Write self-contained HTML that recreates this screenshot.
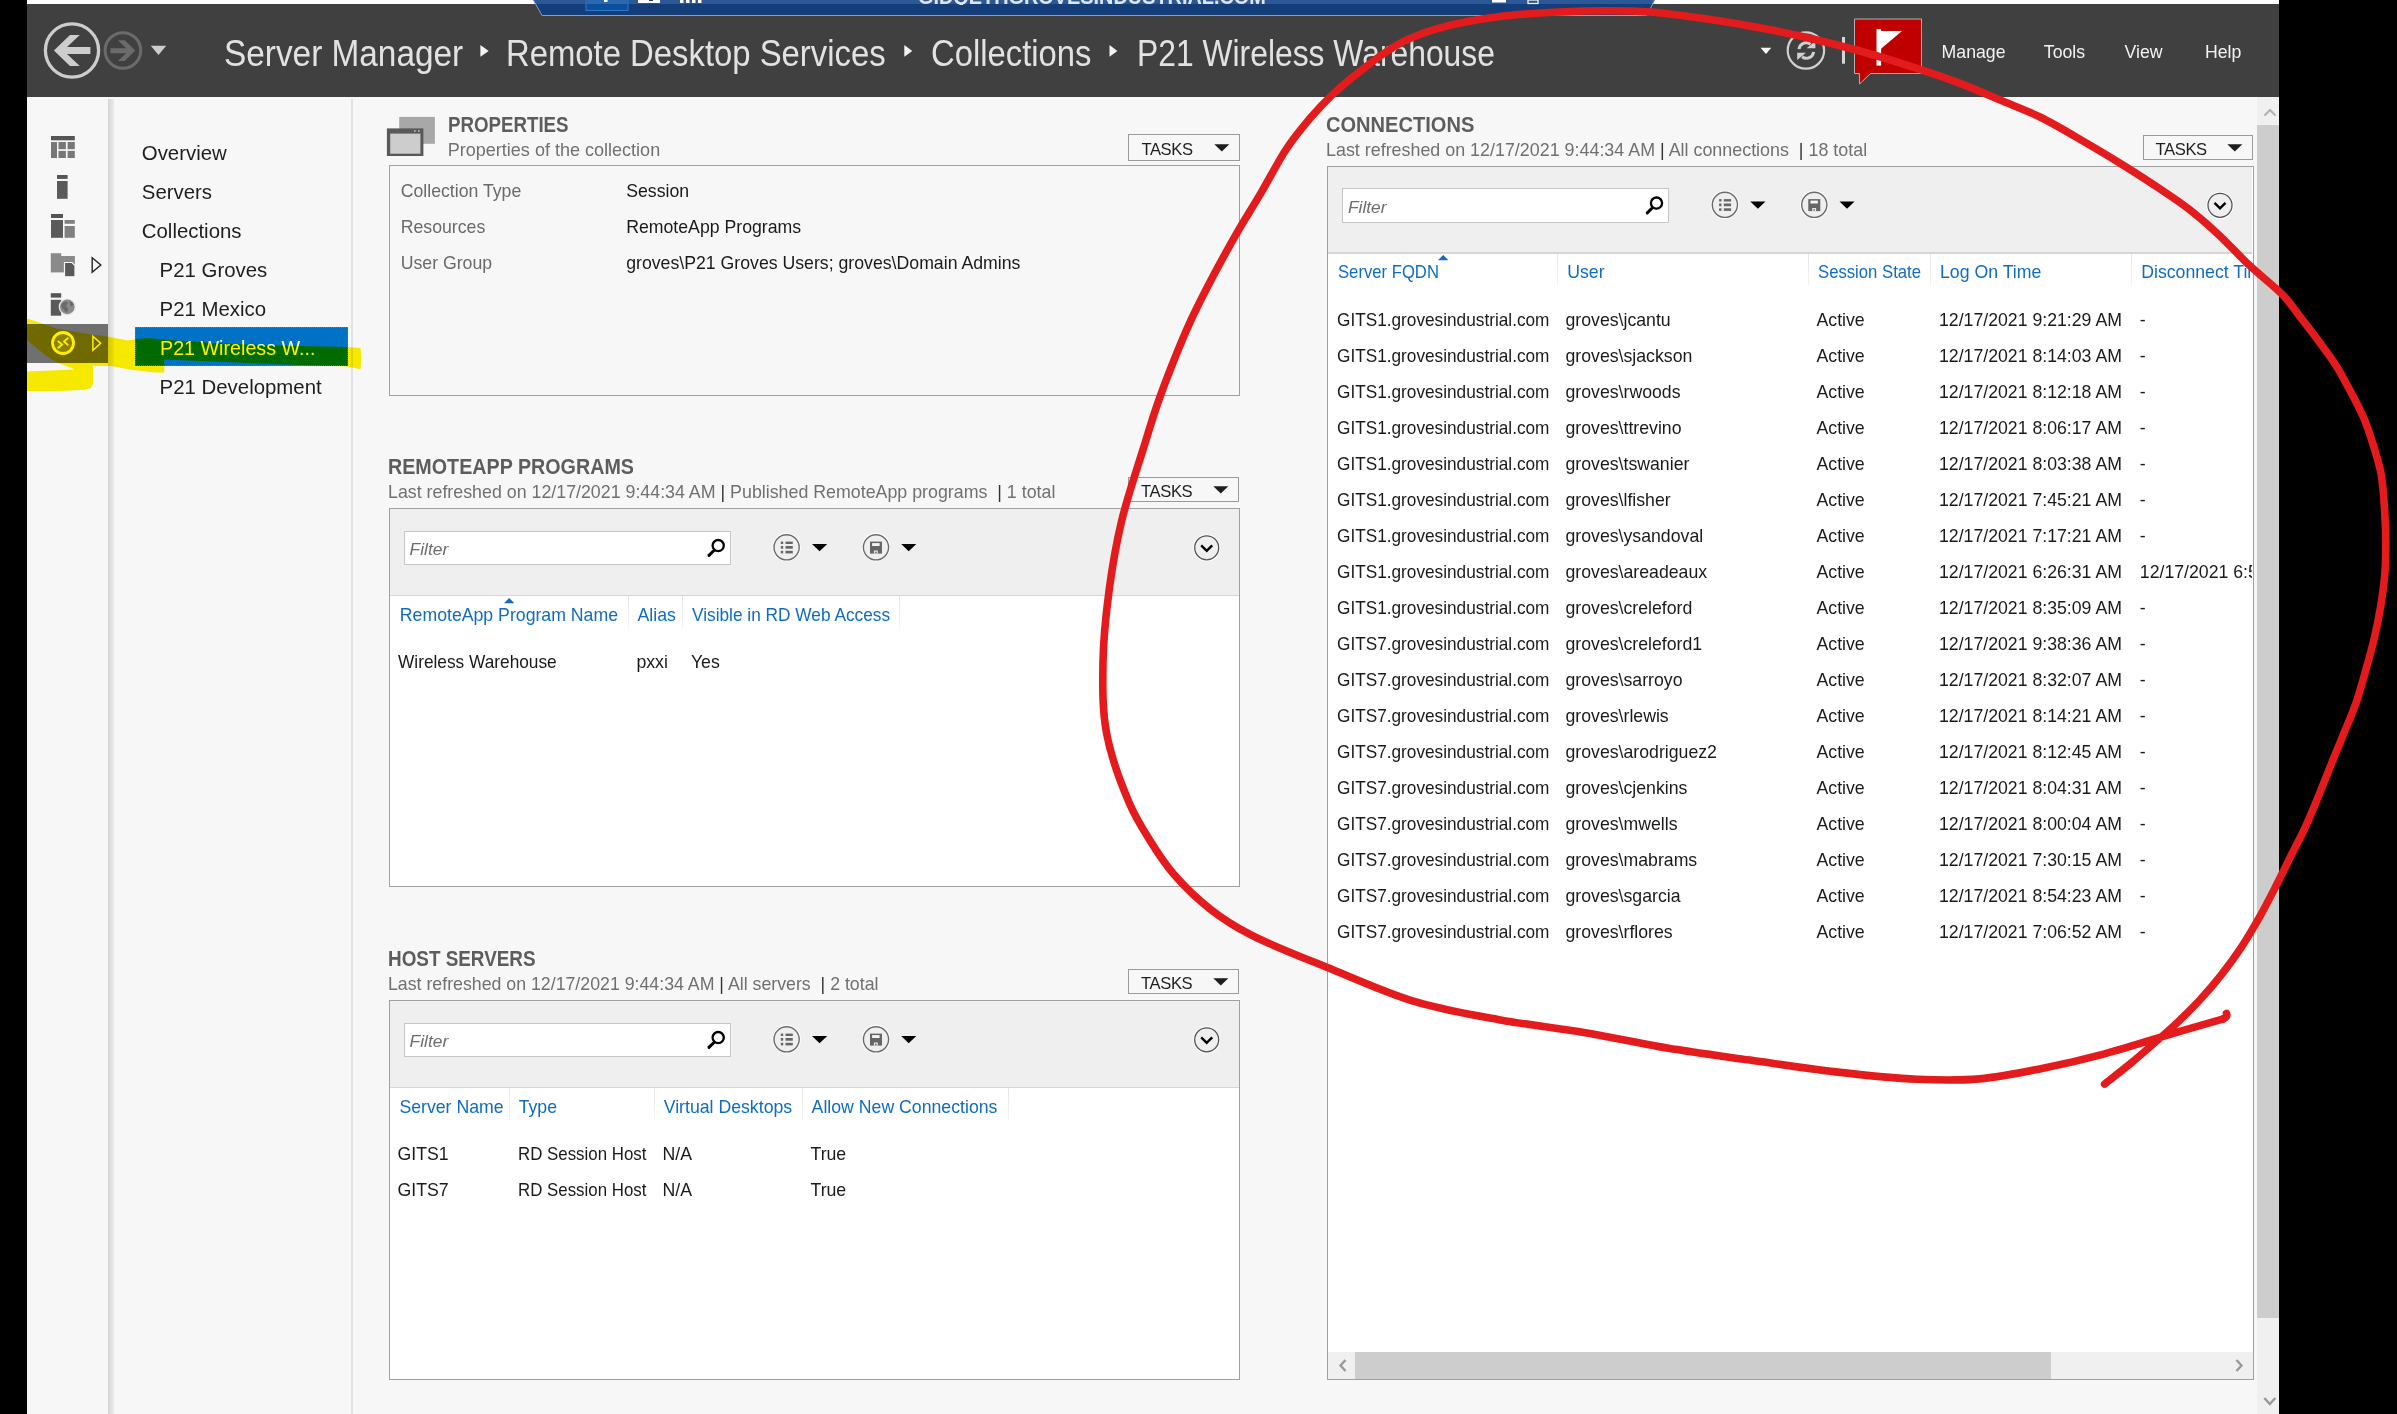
<!DOCTYPE html>
<html><head><meta charset="utf-8"><title>Server Manager</title>
<style>
html,body{margin:0;padding:0;}
body{width:2397px;height:1414px;overflow:hidden;position:relative;background:#f7f7f7;font-family:"Liberation Sans", sans-serif;}
.t{position:absolute;line-height:1;white-space:pre;font-family:"Liberation Sans", sans-serif;}
svg{display:block}
</style></head><body>
<div style="position:absolute;left:0px;top:0px;width:27px;height:1414px;background:#000"></div>
<div style="position:absolute;left:2279px;top:0px;width:118px;height:1414px;background:#000"></div>
<div style="position:absolute;left:27px;top:0px;width:2252px;height:4px;background:#fff"></div>
<div style="position:absolute;left:27px;top:4px;width:2252px;height:93px;background:#404040"></div>
<svg style="position:absolute;left:0;top:0" width="2397" height="20">
<polygon points="533.4,0 1654.5,0 1647,15.5 542,15.5" fill="#133e7a"/>
<polygon points="533.4,0 1654.5,0 1652.6,4 535.3,4" fill="#2c5898"/>
<line x1="542" y1="15.5" x2="1647" y2="15.5" stroke="#7aa0d8" stroke-width="1"/>
<line x1="533.4" y1="0" x2="542" y2="15.5" stroke="#7aa0d8" stroke-width="1"/>
<line x1="1654.5" y1="0" x2="1647" y2="15.5" stroke="#7aa0d8" stroke-width="1"/>
<rect x="586" y="-1" width="42" height="11.5" fill="#0f4f9a" stroke="#2a7bd0" stroke-width="1"/>
<rect x="586.5" y="0" width="41" height="4" fill="#2a68b0"/>
<rect x="604" y="0" width="3.5" height="2" fill="#fff"/>
<rect x="638" y="0" width="22" height="3" fill="#fff"/>
<rect x="649" y="0" width="4" height="1" fill="#133e7a"/>
<rect x="680" y="0" width="3.5" height="3" fill="#fff"/>
<rect x="686" y="0" width="3.5" height="3" fill="#fff"/>
<rect x="692" y="0" width="3.5" height="3" fill="#fff"/>
<rect x="698" y="0" width="3.5" height="3" fill="#fff"/>
</svg>
<div style="position:absolute;left:0;top:0;width:2397px;height:4.5px;overflow:hidden"><div class="t" style="left:917.7px;top:-14.5px;font-size:22px;font-weight:bold;color:#dfe6f0;transform:scaleX(0.9033);transform-origin:0 0">GIDQETHGROVESINDUSTRIAL.COM</div></div>
<svg style="position:absolute;left:0;top:0" width="2397" height="20"><rect x="1492" y="0" width="14" height="2.5" fill="#fff"/><rect x="1528" y="0" width="10" height="3.5" fill="none" stroke="#fff" stroke-width="1.2"/></svg>
<svg style="position:absolute;left:0;top:0" width="260" height="97">
<circle cx="72" cy="50.5" r="26.6" fill="none" stroke="#cdcdcd" stroke-width="3.3"/>
<polygon points="53.9,50.5 70,35 79.8,35 67,47.1 90.4,47.1 90.4,53.9 67,53.9 79.8,66 70,66" fill="#cdcdcd"/>
<circle cx="122.9" cy="50.5" r="17.8" fill="none" stroke="#6b6b6b" stroke-width="3"/>
<polygon points="135.3,50.5 124.7,40.3 117.9,40.3 126.2,48.3 110.5,48.3 110.5,53.3 126.2,53.3 117.9,61 124.7,61" fill="#6b6b6b"/>
<polygon points="150.8,45.8 166.2,45.8 158.5,55" fill="#cdcdcd"/>
</svg>
<div class="t" style="left:223.6px;top:35.00px;font-size:37.5px;color:#e2e2e2;transform:scaleX(0.8896);transform-origin:0 0;">Server Manager</div>
<div class="t" style="left:506.4px;top:35.00px;font-size:37.5px;color:#e2e2e2;transform:scaleX(0.8757);transform-origin:0 0;">Remote Desktop Services</div>
<div class="t" style="left:931.1px;top:35.00px;font-size:37.5px;color:#e2e2e2;transform:scaleX(0.8745);transform-origin:0 0;">Collections</div>
<div class="t" style="left:1136.7px;top:35.00px;font-size:37.5px;color:#e2e2e2;transform:scaleX(0.8487);transform-origin:0 0;">P21 Wireless Warehouse</div>
<svg style="position:absolute;left:0;top:0" width="2397" height="97">
<polygon points="480.4,45 488.7,50.9 480.4,56.7" fill="#f4f4f4"/>
<polygon points="904.3,45 912.3,50.9 904.3,56.7" fill="#f4f4f4"/>
<polygon points="1109.5,45 1117.4,50.9 1109.5,56.7" fill="#f4f4f4"/>
<polygon points="1760.6,47.8 1771.2,47.8 1766,54" fill="#ffffff"/>
<circle cx="1805.9" cy="50.5" r="18.2" fill="none" stroke="#d0d0d0" stroke-width="2.2"/>
<path d="M1799,49.2 A7.2,7.2 0 0 1 1810.5,44.2" fill="none" stroke="#d0d0d0" stroke-width="3"/>
<polygon points="1806.6,48.2 1815.4,48.2 1815.4,41" fill="#d0d0d0"/>
<path d="M1813.6,51.8 A7.2,7.2 0 0 1 1802.1,56.8" fill="none" stroke="#d0d0d0" stroke-width="3"/>
<polygon points="1806,52.8 1797.2,52.8 1797.2,60" fill="#d0d0d0"/>
<rect x="1842" y="37" width="3" height="26.7" fill="#d6d6d6"/>
<polygon points="1854.5,19 1921.5,19 1921.5,73.5 1870.5,73.5 1859.6,84 1859.3,73.5 1854.5,73.5" fill="#c00000" stroke="#b0b0b0" stroke-width="1"/>
<rect x="1876.5" y="29.1" width="4.6" height="36.5" fill="#fff"/>
<polygon points="1881,31 1902,31 1881,48.7" fill="#fff"/>
</svg>
<div class="t" style="left:1941.6px;top:44.00px;font-size:17.7px;color:#f2f2f2;">Manage</div>
<div class="t" style="left:2043.8px;top:44.00px;font-size:17.7px;color:#f2f2f2;">Tools</div>
<div class="t" style="left:2124.6px;top:44.00px;font-size:17.7px;color:#f2f2f2;">View</div>
<div class="t" style="left:2205.0px;top:44.00px;font-size:17.7px;color:#f2f2f2;">Help</div>
<div style="position:absolute;left:27px;top:324.2px;width:81px;height:38.6px;background:#707070"></div>
<div style="position:absolute;left:108px;top:99px;width:6px;height:1315px;background:linear-gradient(to right,#d4d4d4,#e3e3e3 60%,#ececec)"></div>
<svg style="position:absolute;left:0;top:97px" width="110" height="300" viewBox="0 97 110 300">
<rect x="51" y="136" width="23.8" height="4.3" fill="#555"/>
<rect x="51" y="142" width="6" height="16" fill="#777"/>
<rect x="58.5" y="142" width="7.4" height="7.2" fill="#777"/>
<rect x="67.6" y="142" width="7.2" height="7.2" fill="#777"/>
<rect x="58.5" y="150.9" width="7.4" height="7.1" fill="#777"/>
<rect x="67.6" y="150.9" width="7.2" height="7.1" fill="#777"/>
<rect x="57" y="175" width="10.6" height="3.9" fill="#555"/>
<rect x="57" y="181" width="10.6" height="17.8" fill="#5a5a5a"/>
<rect x="51" y="214" width="12" height="4" fill="#555"/>
<rect x="51" y="220" width="12" height="17.8" fill="#5a5a5a"/>
<rect x="64.6" y="220" width="10.2" height="3.8" fill="#808080"/>
<rect x="64.6" y="226" width="10.2" height="11.8" fill="#808080"/>
<rect x="50.8" y="253.2" width="10.4" height="3.3" fill="#8a8a8a"/>
<rect x="50.8" y="256" width="24.1" height="16.4" fill="#8a8a8a"/>
<polygon points="64.5,262.5 72,262.5 75,265.5 75,276.8 64.5,276.8" fill="#5a5a5a" stroke="#f7f7f7" stroke-width="1.2"/>
<polygon points="92.2,257.8 100.8,265 92.2,272.2" fill="none" stroke="#222" stroke-width="1.4"/>
<rect x="50.8" y="293.2" width="10.4" height="4.4" fill="#555"/>
<rect x="50.8" y="299.8" width="10.4" height="15.9" fill="#5a5a5a"/>
<circle cx="67.3" cy="306.9" r="8.6" fill="#e9e9e9"/>
<circle cx="67.3" cy="306.9" r="7.3" fill="#8a8a8a"/>
<path d="M61.5,304 q2.5,-3 5.5,-2.5 q1.5,2 -0.5,3.5 q-1,2 1.5,3 q0.5,2.5 -1,4.5 q-3,-1 -3.5,-3.5 q-2.5,-1 -2,-5z M69.5,301 q3,1 4.2,3.8 q-1.5,0.5 -2.5,2 q-1.5,-1.5 -1.7,-5.8z" fill="#6a6a6a"/>
<circle cx="63" cy="343" r="10.5" fill="#8a8a8a" stroke="#ffffff" stroke-width="2.8"/>
<polyline points="57.7,340.9 62.1,344.5 57.7,348.3" fill="none" stroke="#fff" stroke-width="1.8"/>
<polyline points="68.3,337.7 64,341.4 68.3,345.3" fill="none" stroke="#fff" stroke-width="1.8"/>
<polygon points="92.9,336.3 100.6,343.3 92.9,350.2" fill="none" stroke="#fff" stroke-width="1.5"/>
</svg>
<div style="position:absolute;left:351px;top:99px;width:1.6px;height:1315px;background:#e2e2e2"></div>
<div class="t" style="left:141.8px;top:143.00px;font-size:20.4px;color:#1e1e1e;">Overview</div>
<div class="t" style="left:141.8px;top:182.00px;font-size:20.4px;color:#1e1e1e;">Servers</div>
<div class="t" style="left:141.8px;top:221.00px;font-size:20.4px;color:#1e1e1e;">Collections</div>
<div class="t" style="left:159.6px;top:260.00px;font-size:20.4px;color:#1e1e1e;">P21 Groves</div>
<div class="t" style="left:159.6px;top:299.00px;font-size:20.4px;color:#1e1e1e;">P21 Mexico</div>
<div style="position:absolute;left:135px;top:327px;width:213px;height:39px;background:#0072c6;box-sizing:border-box;border:1px dotted #a06a3a"></div>
<div class="t" style="left:159.6px;top:338.00px;font-size:20.4px;color:#ffffff;transform:scaleX(0.9660);transform-origin:0 0;">P21 Wireless W...</div>
<div class="t" style="left:159.6px;top:377.00px;font-size:20.4px;color:#1e1e1e;">P21 Development</div>
<svg style="position:absolute;left:380px;top:110px" width="60" height="50" viewBox="380 110 60 50">
<rect x="399.2" y="116.9" width="35.7" height="26.9" fill="#a8a8a8"/>
<rect x="386.9" y="128.4" width="36.5" height="27.6" fill="#595959"/>
<rect x="390.2" y="133.6" width="30.2" height="20.1" fill="#cdcdcd"/>
<rect x="414" y="130.3" width="1.6" height="1.4" fill="#ccc"/>
<rect x="418" y="130.3" width="1.6" height="1.4" fill="#ccc"/>
</svg>
<div class="t" style="left:447.7px;top:114.00px;font-size:21.6px;color:#5d5d5d;font-weight:bold;transform:scaleX(0.8662);transform-origin:0 0;">PROPERTIES</div>
<div class="t" style="left:447.7px;top:141.00px;font-size:18.05px;color:#707070;">Properties of the collection</div>
<div style="position:absolute;left:1128.3px;top:134px;width:111.40000000000009px;height:26.69999999999999px;box-sizing:border-box;border:1px solid #9a9a9a;background:#f7f7f7"></div>
<div class="t" style="left:1141.4px;top:142.00px;font-size:16.6px;color:#1e1e1e;letter-spacing:-0.4px">TASKS</div>
<svg style="position:absolute;left:1213.7px;top:143.5px" width="16" height="9"><polygon points="0.3,0.2 15.3,0.2 7.8,7.6" fill="#1e1e1e"/></svg>
<div style="position:absolute;left:389px;top:165px;width:851px;height:231px;box-sizing:border-box;border:1px solid #a0a0a0"></div>
<div class="t" style="left:400.7px;top:183.00px;font-size:17.7px;color:#6a6a6a;">Collection Type</div>
<div class="t" style="left:626.2px;top:183.00px;font-size:17.7px;color:#1a1a1a;">Session</div>
<div class="t" style="left:400.7px;top:219.00px;font-size:17.7px;color:#6a6a6a;">Resources</div>
<div class="t" style="left:626.2px;top:219.00px;font-size:17.7px;color:#1a1a1a;">RemoteApp Programs</div>
<div class="t" style="left:400.7px;top:255.00px;font-size:17.7px;color:#6a6a6a;">User Group</div>
<div class="t" style="left:626.2px;top:255.00px;font-size:17.7px;color:#1a1a1a;">groves\P21 Groves Users; groves\Domain Admins</div>
<div class="t" style="left:387.6px;top:456.00px;font-size:21.6px;color:#5d5d5d;font-weight:bold;transform:scaleX(0.9124);transform-origin:0 0;">REMOTEAPP PROGRAMS</div>
<div class="t" style="left:387.6px;top:484.00px;font-size:17.7px;color:#707070;transform:scaleX(1.0064);transform-origin:0 0;"><span style="color:#707070">Last refreshed on 12/17/2021 9:44:34 AM </span><span style="color:#333">|</span><span style="color:#707070"> Published RemoteApp programs  </span><span style="color:#333">|</span><span style="color:#707070"> 1 total</span></div>
<div style="position:absolute;left:1128px;top:476.5px;width:111.29999999999995px;height:25.69999999999999px;box-sizing:border-box;border:1px solid #9a9a9a;background:#f7f7f7"></div>
<div class="t" style="left:1141.1px;top:484.00px;font-size:16.6px;color:#1e1e1e;letter-spacing:-0.4px">TASKS</div>
<svg style="position:absolute;left:1213.3px;top:486.0px" width="16" height="9"><polygon points="0.3,0.2 15.3,0.2 7.8,7.6" fill="#1e1e1e"/></svg>
<div style="position:absolute;left:389px;top:508px;width:851px;height:379px;box-sizing:border-box;border:1px solid #a0a0a0;background:#fff"></div>
<div style="position:absolute;left:390px;top:509px;width:849px;height:87px;background:#efefef"></div>
<div style="position:absolute;left:390px;top:594.5px;width:849px;height:1.5px;background:#d6d6d6"></div>
<div style="position:absolute;left:404px;top:530.5px;width:326.70000000000005px;height:34.89999999999998px;box-sizing:border-box;border:1px solid #c6c6c6;background:#fff"></div>
<div class="t" style="left:409.6px;top:541.00px;font-size:17.4px;color:#6d6d6d;font-style:italic">Filter</div>
<svg style="position:absolute;left:0;top:0;overflow:visible" width="1" height="1">
<circle cx="718.2" cy="545.5999999999999" r="5.6" fill="none" stroke="#000" stroke-width="2.3"/>
<line x1="709.0" y1="555.4" x2="713.9000000000001" y2="550.5" stroke="#000" stroke-width="3" stroke-linecap="round"/>
<circle cx="786.6" cy="547.3" r="14.2" fill="#ffffff"/>
<circle cx="786.6" cy="547.3" r="12.6" fill="#efefef" stroke="#6b6b6b" stroke-width="1.4"/>
<rect x="780.8000000000001" y="541.5999999999999" width="2.4" height="2.4" fill="#666"/>
<rect x="780.8000000000001" y="546.0" width="2.4" height="2.7" fill="#666"/>
<rect x="780.8000000000001" y="550.8" width="2.4" height="2.6" fill="#666"/>
<rect x="785.5" y="541.5999999999999" width="7.3" height="2.4" fill="#666"/>
<rect x="785.5" y="546.0" width="7.3" height="2.7" fill="#666"/>
<rect x="785.5" y="550.8" width="7.3" height="2.6" fill="#666"/>
<polygon points="812.0,544.0 827.2,544.0 819.6,551.3" fill="#000"/>
<circle cx="876.0" cy="547.3" r="14.2" fill="#ffffff"/>
<circle cx="876.0" cy="547.3" r="12.6" fill="#efefef" stroke="#6b6b6b" stroke-width="1.4"/>
<rect x="870.0" y="541.5999999999999" width="12" height="12" fill="#666"/>
<rect x="872.1" y="543.0999999999999" width="7.5" height="2.9" fill="#f4f4f4"/>
<rect x="873.9" y="550.5" width="3.9" height="3.1" fill="#e8e8e8"/>
<rect x="875.1" y="551.6999999999999" width="1.5" height="1.5" fill="#666"/>
<polygon points="901.2,544.0 916.3000000000001,544.0 908.7,551.3" fill="#000"/>
<circle cx="1206.7" cy="547.8" r="13.6" fill="#ffffff"/>
<circle cx="1206.7" cy="547.8" r="12" fill="#efefef" stroke="#555" stroke-width="1.3"/>
<polyline points="1201.2,545.3 1206.7,550.8 1212.2,545.3" fill="none" stroke="#000" stroke-width="2.4"/>
</svg>
<div class="t" style="left:399.8px;top:607.00px;font-size:17.7px;color:#0f6cc0;">RemoteApp Program Name</div>
<div class="t" style="left:637.5px;top:607.00px;font-size:17.7px;color:#0f6cc0;">Alias</div>
<div class="t" style="left:692.0px;top:607.00px;font-size:17.7px;color:#0f6cc0;transform:scaleX(0.9764);transform-origin:0 0;">Visible in RD Web Access</div>
<div style="position:absolute;left:627.8px;top:596px;width:1px;height:32px;background:linear-gradient(#e4e4e4,#f4f4f4)"></div>
<div style="position:absolute;left:681.9px;top:596px;width:1px;height:32px;background:linear-gradient(#e4e4e4,#f4f4f4)"></div>
<div style="position:absolute;left:899.3px;top:596px;width:1px;height:32px;background:linear-gradient(#e4e4e4,#f4f4f4)"></div>
<svg style="position:absolute;left:503.8px;top:597.5px" width="11" height="6"><polygon points="0,5.2 10.4,5.2 5.2,0" fill="#0f6cc0"/></svg>
<div class="t" style="left:398.0px;top:654.00px;font-size:17.7px;color:#1a1a1a;transform:scaleX(0.9765);transform-origin:0 0;">Wireless Warehouse</div>
<div class="t" style="left:636.4px;top:654.00px;font-size:17.7px;color:#1a1a1a;">pxxi</div>
<div class="t" style="left:690.9px;top:654.00px;font-size:17.7px;color:#1a1a1a;">Yes</div>
<div class="t" style="left:387.6px;top:948.00px;font-size:21.6px;color:#5d5d5d;font-weight:bold;transform:scaleX(0.8742);transform-origin:0 0;">HOST SERVERS</div>
<div class="t" style="left:387.6px;top:976.00px;font-size:17.7px;color:#707070;transform:scaleX(1.0029);transform-origin:0 0;"><span style="color:#707070">Last refreshed on 12/17/2021 9:44:34 AM </span><span style="color:#333">|</span><span style="color:#707070"> All servers  </span><span style="color:#333">|</span><span style="color:#707070"> 2 total</span></div>
<div style="position:absolute;left:1128px;top:968.7px;width:111.29999999999995px;height:25.699999999999932px;box-sizing:border-box;border:1px solid #9a9a9a;background:#f7f7f7"></div>
<div class="t" style="left:1141.1px;top:976.00px;font-size:16.6px;color:#1e1e1e;letter-spacing:-0.4px">TASKS</div>
<svg style="position:absolute;left:1213.3px;top:978.2px" width="16" height="9"><polygon points="0.3,0.2 15.3,0.2 7.8,7.6" fill="#1e1e1e"/></svg>
<div style="position:absolute;left:389px;top:1000px;width:851px;height:380px;box-sizing:border-box;border:1px solid #a0a0a0;background:#fff"></div>
<div style="position:absolute;left:390px;top:1001px;width:849px;height:87px;background:#efefef"></div>
<div style="position:absolute;left:390px;top:1086.5px;width:849px;height:1.5px;background:#d6d6d6"></div>
<div style="position:absolute;left:404px;top:1022.5px;width:326.70000000000005px;height:34.90000000000009px;box-sizing:border-box;border:1px solid #c6c6c6;background:#fff"></div>
<div class="t" style="left:409.6px;top:1033.00px;font-size:17.4px;color:#6d6d6d;font-style:italic">Filter</div>
<svg style="position:absolute;left:0;top:0;overflow:visible" width="1" height="1">
<circle cx="718.2" cy="1037.6" r="5.6" fill="none" stroke="#000" stroke-width="2.3"/>
<line x1="709.0" y1="1047.3999999999999" x2="713.9000000000001" y2="1042.5" stroke="#000" stroke-width="3" stroke-linecap="round"/>
<circle cx="786.6" cy="1039.3" r="14.2" fill="#ffffff"/>
<circle cx="786.6" cy="1039.3" r="12.6" fill="#efefef" stroke="#6b6b6b" stroke-width="1.4"/>
<rect x="780.8000000000001" y="1033.6" width="2.4" height="2.4" fill="#666"/>
<rect x="780.8000000000001" y="1038.0" width="2.4" height="2.7" fill="#666"/>
<rect x="780.8000000000001" y="1042.8" width="2.4" height="2.6" fill="#666"/>
<rect x="785.5" y="1033.6" width="7.3" height="2.4" fill="#666"/>
<rect x="785.5" y="1038.0" width="7.3" height="2.7" fill="#666"/>
<rect x="785.5" y="1042.8" width="7.3" height="2.6" fill="#666"/>
<polygon points="812.0,1036.0 827.2,1036.0 819.6,1043.3" fill="#000"/>
<circle cx="876.0" cy="1039.3" r="14.2" fill="#ffffff"/>
<circle cx="876.0" cy="1039.3" r="12.6" fill="#efefef" stroke="#6b6b6b" stroke-width="1.4"/>
<rect x="870.0" y="1033.6" width="12" height="12" fill="#666"/>
<rect x="872.1" y="1035.1" width="7.5" height="2.9" fill="#f4f4f4"/>
<rect x="873.9" y="1042.5" width="3.9" height="3.1" fill="#e8e8e8"/>
<rect x="875.1" y="1043.7" width="1.5" height="1.5" fill="#666"/>
<polygon points="901.2,1036.0 916.3000000000001,1036.0 908.7,1043.3" fill="#000"/>
<circle cx="1206.7" cy="1039.8" r="13.6" fill="#ffffff"/>
<circle cx="1206.7" cy="1039.8" r="12" fill="#efefef" stroke="#555" stroke-width="1.3"/>
<polyline points="1201.2,1037.3 1206.7,1042.8 1212.2,1037.3" fill="none" stroke="#000" stroke-width="2.4"/>
</svg>
<div class="t" style="left:399.4px;top:1099.00px;font-size:17.7px;color:#0f6cc0;">Server Name</div>
<div class="t" style="left:518.7px;top:1099.00px;font-size:17.7px;color:#0f6cc0;">Type</div>
<div class="t" style="left:663.7px;top:1099.00px;font-size:17.7px;color:#0f6cc0;">Virtual Desktops</div>
<div class="t" style="left:811.6px;top:1099.00px;font-size:17.7px;color:#0f6cc0;">Allow New Connections</div>
<div style="position:absolute;left:508.8px;top:1088px;width:1px;height:32px;background:linear-gradient(#e4e4e4,#f4f4f4)"></div>
<div style="position:absolute;left:653.8px;top:1088px;width:1px;height:32px;background:linear-gradient(#e4e4e4,#f4f4f4)"></div>
<div style="position:absolute;left:802px;top:1088px;width:1px;height:32px;background:linear-gradient(#e4e4e4,#f4f4f4)"></div>
<div style="position:absolute;left:1008px;top:1088px;width:1px;height:32px;background:linear-gradient(#e4e4e4,#f4f4f4)"></div>
<svg style="position:absolute;left:-105.2px;top:1089.5px" width="11" height="6"><polygon points="0,5.2 10.4,5.2 5.2,0" fill="#0f6cc0"/></svg>
<div class="t" style="left:397.5px;top:1146.00px;font-size:17.7px;color:#1a1a1a;">GITS1</div>
<div class="t" style="left:518.0px;top:1146.00px;font-size:17.7px;color:#1a1a1a;transform:scaleX(0.9535);transform-origin:0 0;">RD Session Host</div>
<div class="t" style="left:662.6px;top:1146.00px;font-size:17.7px;color:#1a1a1a;">N/A</div>
<div class="t" style="left:810.5px;top:1146.00px;font-size:17.7px;color:#1a1a1a;">True</div>
<div class="t" style="left:397.5px;top:1182.00px;font-size:17.7px;color:#1a1a1a;">GITS7</div>
<div class="t" style="left:518.0px;top:1182.00px;font-size:17.7px;color:#1a1a1a;transform:scaleX(0.9535);transform-origin:0 0;">RD Session Host</div>
<div class="t" style="left:662.6px;top:1182.00px;font-size:17.7px;color:#1a1a1a;">N/A</div>
<div class="t" style="left:810.5px;top:1182.00px;font-size:17.7px;color:#1a1a1a;">True</div>
<div class="t" style="left:1326.0px;top:114.00px;font-size:21.6px;color:#5d5d5d;font-weight:bold;transform:scaleX(0.9298);transform-origin:0 0;">CONNECTIONS</div>
<div class="t" style="left:1326px;top:142.00px;font-size:17.7px;color:#707070;transform:scaleX(1.0109);transform-origin:0 0;"><span style="color:#707070">Last refreshed on 12/17/2021 9:44:34 AM </span><span style="color:#333">|</span><span style="color:#707070"> All connections  </span><span style="color:#333">|</span><span style="color:#707070"> 18 total</span></div>
<div style="position:absolute;left:2142.5px;top:134.9px;width:110.80000000000018px;height:25.400000000000006px;box-sizing:border-box;border:1px solid #9a9a9a;background:#f7f7f7"></div>
<div class="t" style="left:2155.6px;top:142.00px;font-size:16.6px;color:#1e1e1e;letter-spacing:-0.4px">TASKS</div>
<svg style="position:absolute;left:2227.3px;top:144.4px" width="16" height="9"><polygon points="0.3,0.2 15.3,0.2 7.8,7.6" fill="#1e1e1e"/></svg>
<div style="position:absolute;left:1327.3px;top:165.5px;width:927px;height:1214.5px;box-sizing:border-box;border:1px solid #a0a0a0;background:#fff"></div>
<div style="position:absolute;left:1328.3px;top:166.5px;width:924.0000000000002px;height:87px;background:#efefef"></div>
<div style="position:absolute;left:1328.3px;top:252.0px;width:924.0000000000002px;height:1.5px;background:#d6d6d6"></div>
<div style="position:absolute;left:1342.3px;top:188.0px;width:326.70000000000005px;height:34.900000000000006px;box-sizing:border-box;border:1px solid #c6c6c6;background:#fff"></div>
<div class="t" style="left:1347.9px;top:199.00px;font-size:17.4px;color:#6d6d6d;font-style:italic">Filter</div>
<svg style="position:absolute;left:0;top:0;overflow:visible" width="1" height="1">
<circle cx="1656.5" cy="203.10000000000002" r="5.6" fill="none" stroke="#000" stroke-width="2.3"/>
<line x1="1647.3" y1="212.9" x2="1652.2" y2="208.0" stroke="#000" stroke-width="3" stroke-linecap="round"/>
<circle cx="1724.9" cy="204.8" r="14.2" fill="#ffffff"/>
<circle cx="1724.9" cy="204.8" r="12.6" fill="#efefef" stroke="#6b6b6b" stroke-width="1.4"/>
<rect x="1719.1000000000001" y="199.10000000000002" width="2.4" height="2.4" fill="#666"/>
<rect x="1719.1000000000001" y="203.5" width="2.4" height="2.7" fill="#666"/>
<rect x="1719.1000000000001" y="208.3" width="2.4" height="2.6" fill="#666"/>
<rect x="1723.8000000000002" y="199.10000000000002" width="7.3" height="2.4" fill="#666"/>
<rect x="1723.8000000000002" y="203.5" width="7.3" height="2.7" fill="#666"/>
<rect x="1723.8000000000002" y="208.3" width="7.3" height="2.6" fill="#666"/>
<polygon points="1750.3,201.5 1765.5,201.5 1757.9,208.8" fill="#000"/>
<circle cx="1814.3" cy="204.8" r="14.2" fill="#ffffff"/>
<circle cx="1814.3" cy="204.8" r="12.6" fill="#efefef" stroke="#6b6b6b" stroke-width="1.4"/>
<rect x="1808.3" y="199.10000000000002" width="12" height="12" fill="#666"/>
<rect x="1810.3999999999999" y="200.60000000000002" width="7.5" height="2.9" fill="#f4f4f4"/>
<rect x="1812.2" y="208.0" width="3.9" height="3.1" fill="#e8e8e8"/>
<rect x="1813.3999999999999" y="209.20000000000002" width="1.5" height="1.5" fill="#666"/>
<polygon points="1839.5,201.5 1854.6,201.5 1847.0,208.8" fill="#000"/>
<circle cx="2220.0" cy="205.3" r="13.6" fill="#ffffff"/>
<circle cx="2220.0" cy="205.3" r="12" fill="#efefef" stroke="#555" stroke-width="1.3"/>
<polyline points="2214.5,202.8 2220.0,208.3 2225.5,202.8" fill="none" stroke="#000" stroke-width="2.4"/>
</svg>
<div style="position:absolute;left:1328px;top:252.5px;width:924px;height:1000px;overflow:hidden">
<div class="t" style="left:10.3px;top:11.50px;font-size:17.7px;color:#0f6cc0;transform:scaleX(0.9422);transform-origin:0 0;">Server FQDN</div>
<div class="t" style="left:239.2px;top:11.50px;font-size:17.7px;color:#0f6cc0;">User</div>
<div class="t" style="left:490.2px;top:11.50px;font-size:17.7px;color:#0f6cc0;transform:scaleX(0.9440);transform-origin:0 0;">Session State</div>
<div class="t" style="left:612.2px;top:11.50px;font-size:17.7px;color:#0f6cc0;transform:scaleX(1.0006);transform-origin:0 0;">Log On Time</div>
<div class="t" style="left:813.2px;top:11.50px;font-size:17.7px;color:#0f6cc0;">Disconnect Time</div>
<div style="position:absolute;left:229.4000000000001px;top:1px;width:1px;height:32px;background:linear-gradient(#e4e4e4,#f4f4f4)"></div>
<div style="position:absolute;left:480.4000000000001px;top:1px;width:1px;height:32px;background:linear-gradient(#e4e4e4,#f4f4f4)"></div>
<div style="position:absolute;left:602px;top:1px;width:1px;height:32px;background:linear-gradient(#e4e4e4,#f4f4f4)"></div>
<div style="position:absolute;left:802.5px;top:1px;width:1px;height:32px;background:linear-gradient(#e4e4e4,#f4f4f4)"></div>
<svg style="position:absolute;left:109.79999999999995px;top:2.5px" width="11" height="6"><polygon points="0,5.2 10.4,5.2 5.2,0" fill="#0f6cc0"/></svg>
<div class="t" style="left:8.6px;top:59.50px;font-size:17.7px;color:#1a1a1a;transform:scaleX(0.9735);transform-origin:0 0;">GITS1.grovesindustrial.com</div>
<div class="t" style="left:237.5px;top:59.50px;font-size:17.7px;color:#1a1a1a;">groves\jcantu</div>
<div class="t" style="left:488.5px;top:59.50px;font-size:17.7px;color:#1a1a1a;">Active</div>
<div class="t" style="left:611.0px;top:59.50px;font-size:17.7px;color:#1a1a1a;">12/17/2021 9:21:29 AM</div>
<div class="t" style="left:811.8px;top:59.50px;font-size:17.7px;color:#1a1a1a;">-</div>
<div class="t" style="left:8.6px;top:95.50px;font-size:17.7px;color:#1a1a1a;transform:scaleX(0.9735);transform-origin:0 0;">GITS1.grovesindustrial.com</div>
<div class="t" style="left:237.5px;top:95.50px;font-size:17.7px;color:#1a1a1a;">groves\sjackson</div>
<div class="t" style="left:488.5px;top:95.50px;font-size:17.7px;color:#1a1a1a;">Active</div>
<div class="t" style="left:611.0px;top:95.50px;font-size:17.7px;color:#1a1a1a;">12/17/2021 8:14:03 AM</div>
<div class="t" style="left:811.8px;top:95.50px;font-size:17.7px;color:#1a1a1a;">-</div>
<div class="t" style="left:8.6px;top:131.50px;font-size:17.7px;color:#1a1a1a;transform:scaleX(0.9735);transform-origin:0 0;">GITS1.grovesindustrial.com</div>
<div class="t" style="left:237.5px;top:131.50px;font-size:17.7px;color:#1a1a1a;">groves\rwoods</div>
<div class="t" style="left:488.5px;top:131.50px;font-size:17.7px;color:#1a1a1a;">Active</div>
<div class="t" style="left:611.0px;top:131.50px;font-size:17.7px;color:#1a1a1a;">12/17/2021 8:12:18 AM</div>
<div class="t" style="left:811.8px;top:131.50px;font-size:17.7px;color:#1a1a1a;">-</div>
<div class="t" style="left:8.6px;top:167.50px;font-size:17.7px;color:#1a1a1a;transform:scaleX(0.9735);transform-origin:0 0;">GITS1.grovesindustrial.com</div>
<div class="t" style="left:237.5px;top:167.50px;font-size:17.7px;color:#1a1a1a;">groves\ttrevino</div>
<div class="t" style="left:488.5px;top:167.50px;font-size:17.7px;color:#1a1a1a;">Active</div>
<div class="t" style="left:611.0px;top:167.50px;font-size:17.7px;color:#1a1a1a;">12/17/2021 8:06:17 AM</div>
<div class="t" style="left:811.8px;top:167.50px;font-size:17.7px;color:#1a1a1a;">-</div>
<div class="t" style="left:8.6px;top:203.50px;font-size:17.7px;color:#1a1a1a;transform:scaleX(0.9735);transform-origin:0 0;">GITS1.grovesindustrial.com</div>
<div class="t" style="left:237.5px;top:203.50px;font-size:17.7px;color:#1a1a1a;">groves\tswanier</div>
<div class="t" style="left:488.5px;top:203.50px;font-size:17.7px;color:#1a1a1a;">Active</div>
<div class="t" style="left:611.0px;top:203.50px;font-size:17.7px;color:#1a1a1a;">12/17/2021 8:03:38 AM</div>
<div class="t" style="left:811.8px;top:203.50px;font-size:17.7px;color:#1a1a1a;">-</div>
<div class="t" style="left:8.6px;top:239.50px;font-size:17.7px;color:#1a1a1a;transform:scaleX(0.9735);transform-origin:0 0;">GITS1.grovesindustrial.com</div>
<div class="t" style="left:237.5px;top:239.50px;font-size:17.7px;color:#1a1a1a;">groves\lfisher</div>
<div class="t" style="left:488.5px;top:239.50px;font-size:17.7px;color:#1a1a1a;">Active</div>
<div class="t" style="left:611.0px;top:239.50px;font-size:17.7px;color:#1a1a1a;">12/17/2021 7:45:21 AM</div>
<div class="t" style="left:811.8px;top:239.50px;font-size:17.7px;color:#1a1a1a;">-</div>
<div class="t" style="left:8.6px;top:275.50px;font-size:17.7px;color:#1a1a1a;transform:scaleX(0.9735);transform-origin:0 0;">GITS1.grovesindustrial.com</div>
<div class="t" style="left:237.5px;top:275.50px;font-size:17.7px;color:#1a1a1a;">groves\ysandoval</div>
<div class="t" style="left:488.5px;top:275.50px;font-size:17.7px;color:#1a1a1a;">Active</div>
<div class="t" style="left:611.0px;top:275.50px;font-size:17.7px;color:#1a1a1a;">12/17/2021 7:17:21 AM</div>
<div class="t" style="left:811.8px;top:275.50px;font-size:17.7px;color:#1a1a1a;">-</div>
<div class="t" style="left:8.6px;top:311.50px;font-size:17.7px;color:#1a1a1a;transform:scaleX(0.9735);transform-origin:0 0;">GITS1.grovesindustrial.com</div>
<div class="t" style="left:237.5px;top:311.50px;font-size:17.7px;color:#1a1a1a;">groves\areadeaux</div>
<div class="t" style="left:488.5px;top:311.50px;font-size:17.7px;color:#1a1a1a;">Active</div>
<div class="t" style="left:611.0px;top:311.50px;font-size:17.7px;color:#1a1a1a;">12/17/2021 6:26:31 AM</div>
<div class="t" style="left:811.8px;top:311.50px;font-size:17.7px;color:#1a1a1a;">12/17/2021 6:55:12 AM</div>
<div class="t" style="left:8.6px;top:347.50px;font-size:17.7px;color:#1a1a1a;transform:scaleX(0.9735);transform-origin:0 0;">GITS1.grovesindustrial.com</div>
<div class="t" style="left:237.5px;top:347.50px;font-size:17.7px;color:#1a1a1a;">groves\creleford</div>
<div class="t" style="left:488.5px;top:347.50px;font-size:17.7px;color:#1a1a1a;">Active</div>
<div class="t" style="left:611.0px;top:347.50px;font-size:17.7px;color:#1a1a1a;">12/17/2021 8:35:09 AM</div>
<div class="t" style="left:811.8px;top:347.50px;font-size:17.7px;color:#1a1a1a;">-</div>
<div class="t" style="left:8.6px;top:383.50px;font-size:17.7px;color:#1a1a1a;transform:scaleX(0.9735);transform-origin:0 0;">GITS7.grovesindustrial.com</div>
<div class="t" style="left:237.5px;top:383.50px;font-size:17.7px;color:#1a1a1a;">groves\creleford1</div>
<div class="t" style="left:488.5px;top:383.50px;font-size:17.7px;color:#1a1a1a;">Active</div>
<div class="t" style="left:611.0px;top:383.50px;font-size:17.7px;color:#1a1a1a;">12/17/2021 9:38:36 AM</div>
<div class="t" style="left:811.8px;top:383.50px;font-size:17.7px;color:#1a1a1a;">-</div>
<div class="t" style="left:8.6px;top:419.50px;font-size:17.7px;color:#1a1a1a;transform:scaleX(0.9735);transform-origin:0 0;">GITS7.grovesindustrial.com</div>
<div class="t" style="left:237.5px;top:419.50px;font-size:17.7px;color:#1a1a1a;">groves\sarroyo</div>
<div class="t" style="left:488.5px;top:419.50px;font-size:17.7px;color:#1a1a1a;">Active</div>
<div class="t" style="left:611.0px;top:419.50px;font-size:17.7px;color:#1a1a1a;">12/17/2021 8:32:07 AM</div>
<div class="t" style="left:811.8px;top:419.50px;font-size:17.7px;color:#1a1a1a;">-</div>
<div class="t" style="left:8.6px;top:455.50px;font-size:17.7px;color:#1a1a1a;transform:scaleX(0.9735);transform-origin:0 0;">GITS7.grovesindustrial.com</div>
<div class="t" style="left:237.5px;top:455.50px;font-size:17.7px;color:#1a1a1a;">groves\rlewis</div>
<div class="t" style="left:488.5px;top:455.50px;font-size:17.7px;color:#1a1a1a;">Active</div>
<div class="t" style="left:611.0px;top:455.50px;font-size:17.7px;color:#1a1a1a;">12/17/2021 8:14:21 AM</div>
<div class="t" style="left:811.8px;top:455.50px;font-size:17.7px;color:#1a1a1a;">-</div>
<div class="t" style="left:8.6px;top:491.50px;font-size:17.7px;color:#1a1a1a;transform:scaleX(0.9735);transform-origin:0 0;">GITS7.grovesindustrial.com</div>
<div class="t" style="left:237.5px;top:491.50px;font-size:17.7px;color:#1a1a1a;">groves\arodriguez2</div>
<div class="t" style="left:488.5px;top:491.50px;font-size:17.7px;color:#1a1a1a;">Active</div>
<div class="t" style="left:611.0px;top:491.50px;font-size:17.7px;color:#1a1a1a;">12/17/2021 8:12:45 AM</div>
<div class="t" style="left:811.8px;top:491.50px;font-size:17.7px;color:#1a1a1a;">-</div>
<div class="t" style="left:8.6px;top:527.50px;font-size:17.7px;color:#1a1a1a;transform:scaleX(0.9735);transform-origin:0 0;">GITS7.grovesindustrial.com</div>
<div class="t" style="left:237.5px;top:527.50px;font-size:17.7px;color:#1a1a1a;">groves\cjenkins</div>
<div class="t" style="left:488.5px;top:527.50px;font-size:17.7px;color:#1a1a1a;">Active</div>
<div class="t" style="left:611.0px;top:527.50px;font-size:17.7px;color:#1a1a1a;">12/17/2021 8:04:31 AM</div>
<div class="t" style="left:811.8px;top:527.50px;font-size:17.7px;color:#1a1a1a;">-</div>
<div class="t" style="left:8.6px;top:563.50px;font-size:17.7px;color:#1a1a1a;transform:scaleX(0.9735);transform-origin:0 0;">GITS7.grovesindustrial.com</div>
<div class="t" style="left:237.5px;top:563.50px;font-size:17.7px;color:#1a1a1a;">groves\mwells</div>
<div class="t" style="left:488.5px;top:563.50px;font-size:17.7px;color:#1a1a1a;">Active</div>
<div class="t" style="left:611.0px;top:563.50px;font-size:17.7px;color:#1a1a1a;">12/17/2021 8:00:04 AM</div>
<div class="t" style="left:811.8px;top:563.50px;font-size:17.7px;color:#1a1a1a;">-</div>
<div class="t" style="left:8.6px;top:599.50px;font-size:17.7px;color:#1a1a1a;transform:scaleX(0.9735);transform-origin:0 0;">GITS7.grovesindustrial.com</div>
<div class="t" style="left:237.5px;top:599.50px;font-size:17.7px;color:#1a1a1a;">groves\mabrams</div>
<div class="t" style="left:488.5px;top:599.50px;font-size:17.7px;color:#1a1a1a;">Active</div>
<div class="t" style="left:611.0px;top:599.50px;font-size:17.7px;color:#1a1a1a;">12/17/2021 7:30:15 AM</div>
<div class="t" style="left:811.8px;top:599.50px;font-size:17.7px;color:#1a1a1a;">-</div>
<div class="t" style="left:8.6px;top:635.50px;font-size:17.7px;color:#1a1a1a;transform:scaleX(0.9735);transform-origin:0 0;">GITS7.grovesindustrial.com</div>
<div class="t" style="left:237.5px;top:635.50px;font-size:17.7px;color:#1a1a1a;">groves\sgarcia</div>
<div class="t" style="left:488.5px;top:635.50px;font-size:17.7px;color:#1a1a1a;">Active</div>
<div class="t" style="left:611.0px;top:635.50px;font-size:17.7px;color:#1a1a1a;">12/17/2021 8:54:23 AM</div>
<div class="t" style="left:811.8px;top:635.50px;font-size:17.7px;color:#1a1a1a;">-</div>
<div class="t" style="left:8.6px;top:671.50px;font-size:17.7px;color:#1a1a1a;transform:scaleX(0.9735);transform-origin:0 0;">GITS7.grovesindustrial.com</div>
<div class="t" style="left:237.5px;top:671.50px;font-size:17.7px;color:#1a1a1a;">groves\rflores</div>
<div class="t" style="left:488.5px;top:671.50px;font-size:17.7px;color:#1a1a1a;">Active</div>
<div class="t" style="left:611.0px;top:671.50px;font-size:17.7px;color:#1a1a1a;">12/17/2021 7:06:52 AM</div>
<div class="t" style="left:811.8px;top:671.50px;font-size:17.7px;color:#1a1a1a;">-</div>
</div>
<div style="position:absolute;left:1328.3px;top:1352px;width:925px;height:26.5px;background:#f0f0f0"></div>
<div style="position:absolute;left:1355px;top:1352px;width:696px;height:26.5px;background:#cdcdcd"></div>
<svg style="position:absolute;left:0;top:0;overflow:visible" width="1" height="1">
<polyline points="1345.5,1360 1340.5,1365.5 1345.5,1371" fill="none" stroke="#999" stroke-width="2.4"/>
<polyline points="2236.5,1360 2241.5,1365.5 2236.5,1371" fill="none" stroke="#999" stroke-width="2.4"/>
</svg>
<div style="position:absolute;left:2257px;top:97px;width:22px;height:1317px;background:#f0f0f0"></div>
<div style="position:absolute;left:2257px;top:125px;width:22px;height:1193px;background:#cdcdcd"></div>
<svg style="position:absolute;left:0;top:0;overflow:visible" width="1" height="1">
<polyline points="2264.5,115.5 2270,110 2275.5,115.5" fill="none" stroke="#b0b0b0" stroke-width="2"/>
<polyline points="2264.3,1398 2269.8,1404 2275.3,1398" fill="none" stroke="#999" stroke-width="2.4"/>
</svg>
<svg style="position:absolute;left:0;top:0" width="2397" height="1414"><path d="M2222.7,1019.1 C2207.9,1023.3 2194.9,1026.9 2178.2,1031.8 C2156.7,1038.1 2128.2,1047.6 2104.6,1053.9 C2083.0,1059.7 2062.9,1064.3 2042.0,1068.5 C2021.2,1072.6 2000.4,1077.1 1979.5,1078.9 C1958.7,1080.7 1939.2,1080.3 1916.9,1079.3 C1891.0,1078.2 1861.2,1074.8 1833.4,1071.6 C1805.6,1068.4 1777.7,1064.0 1750.0,1060.1 C1722.3,1056.2 1694.8,1052.7 1667.2,1048.1 C1639.4,1043.5 1611.6,1037.2 1583.8,1032.5 C1556.0,1027.8 1528.1,1024.9 1500.3,1019.9 C1472.4,1014.8 1444.4,1010.4 1416.9,1002.2 C1388.7,993.8 1361.1,981.2 1333.4,969.9 C1305.5,958.6 1272.3,946.1 1250.0,934.4 C1234.0,926.0 1223.2,919.2 1210.7,909.4 C1197.6,899.2 1184.2,886.3 1173.6,874.0 C1163.9,862.7 1156.3,850.7 1148.9,838.7 C1141.7,827.1 1135.6,817.5 1129.5,803.4 C1121.2,784.2 1110.9,756.6 1106.5,732.7 C1102.2,709.4 1102.6,685.6 1103.0,662.0 C1103.4,638.4 1105.9,614.8 1109.0,591.3 C1112.1,567.7 1116.1,544.1 1121.7,520.7 C1127.4,497.0 1136.4,470.9 1142.9,450.0 C1148.1,433.2 1152.2,419.4 1157.3,404.6 C1162.3,390.2 1167.6,376.3 1173.2,362.2 C1178.9,348.0 1184.7,333.8 1191.2,319.7 C1197.8,305.5 1205.1,291.4 1212.5,277.3 C1220.0,263.1 1227.7,249.0 1235.8,234.9 C1244.0,220.7 1253.0,206.6 1261.3,192.4 C1269.6,178.3 1278.2,161.5 1285.7,150.0 C1291.1,141.7 1295.3,136.3 1300.9,129.3 C1307.1,121.5 1314.6,112.8 1321.7,105.3 C1328.5,98.2 1335.5,91.7 1342.6,85.5 C1349.4,79.5 1356.4,74.2 1363.4,68.8 C1370.3,63.4 1377.2,57.9 1384.3,53.2 C1391.2,48.6 1397.1,44.6 1405.2,40.7 C1415.1,35.9 1426.7,31.5 1440.0,27.8 C1457.1,23.1 1479.9,19.1 1500.0,16.5 C1520.0,13.9 1541.6,12.9 1560.2,12.0 C1576.3,11.2 1590.2,10.8 1605.2,10.8 C1620.2,10.8 1634.2,10.8 1650.3,12.0 C1668.9,13.4 1691.8,16.8 1710.4,19.5 C1726.5,21.8 1740.5,24.2 1755.4,27.0 C1770.3,29.7 1784.1,32.4 1800.0,36.0 C1818.6,40.2 1840.1,45.5 1860.0,51.0 C1880.1,56.6 1902.1,63.5 1920.0,69.4 C1934.8,74.2 1946.8,78.3 1960.1,83.4 C1973.5,88.5 1986.9,94.5 2000.2,100.1 C2013.5,105.7 2026.7,110.5 2040.0,117.0 C2054.1,123.9 2068.3,132.5 2082.4,140.7 C2096.6,148.9 2111.5,157.8 2124.9,166.2 C2137.2,173.9 2148.9,181.4 2160.0,188.9 C2170.4,195.9 2180.0,202.1 2189.7,209.7 C2199.8,217.6 2209.7,226.3 2219.4,235.4 C2229.5,244.8 2238.7,255.3 2249.1,265.1 C2260.0,275.4 2274.3,285.9 2283.5,295.7 C2290.8,303.5 2295.3,310.6 2301.2,318.3 C2307.3,326.2 2313.7,334.2 2319.6,342.3 C2325.5,350.3 2331.4,358.1 2336.6,366.4 C2341.8,374.6 2346.2,383.3 2350.7,391.8 C2355.2,400.2 2359.8,408.5 2363.5,417.3 C2367.3,426.4 2370.5,436.1 2373.4,445.6 C2376.3,455.0 2379.2,463.7 2381.1,473.9 C2383.2,485.5 2383.9,499.7 2384.7,511.8 C2385.4,522.9 2385.8,533.0 2385.8,543.6 C2385.8,554.2 2385.6,564.9 2384.7,575.5 C2383.8,586.1 2382.3,596.7 2380.5,607.3 C2378.7,617.9 2376.6,628.5 2374.1,639.1 C2371.6,649.7 2368.6,660.3 2365.6,670.9 C2362.6,681.5 2359.8,692.2 2356.1,702.7 C2352.4,713.4 2347.4,724.6 2343.3,734.6 C2339.7,743.6 2336.6,750.9 2332.9,760.0 C2328.7,770.5 2324.0,782.6 2319.4,793.9 C2314.7,805.3 2309.8,817.5 2305.0,827.9 C2300.8,837.1 2296.7,844.3 2292.2,853.3 C2287.2,863.4 2281.5,875.1 2276.2,885.5 C2271.1,895.5 2266.4,904.8 2260.9,914.7 C2255.0,925.2 2248.5,936.5 2241.8,946.6 C2235.3,956.4 2228.6,965.6 2221.5,974.6 C2214.6,983.4 2207.2,992.0 2199.8,1000.0 C2192.7,1007.7 2185.4,1014.9 2178.2,1021.7 C2171.4,1028.2 2165.2,1033.5 2157.8,1040.0 C2149.2,1047.6 2138.8,1056.7 2129.6,1064.3 C2121.1,1071.3 2112.9,1077.5 2104.6,1084.1" fill="none" stroke="#e41b1c" stroke-width="7.6" stroke-linecap="round" stroke-linejoin="round"/><path d="M2222.7,1019.1 Q2228,1017 2226.5,1013.5" fill="none" stroke="#e41b1c" stroke-width="7.6" stroke-linecap="round"/></svg>
<svg style="position:absolute;left:0;top:0;mix-blend-mode:multiply" width="400" height="400"><polygon points="27,318.5 40,322.8 57.7,328.8 75.3,331.7 93,334.8 108,336.6 127.5,340.4 146.7,338 170,340.1 216.8,343.3 275.2,345.6 347.7,347.1 360.5,348 361.5,358 360.5,369.3 347.7,366.5 298.6,364.9 164.3,359.6 164.3,372.5 154.9,372.5 129.2,369.6 111.7,366 93,366 93,384 91,388 84.8,389.7 60,391 27,391 27,371.5 75,369.6 57.7,362.8 47,356.4 40,350.8 27,340" fill="rgb(255,240,0)"/></svg>
</body></html>
